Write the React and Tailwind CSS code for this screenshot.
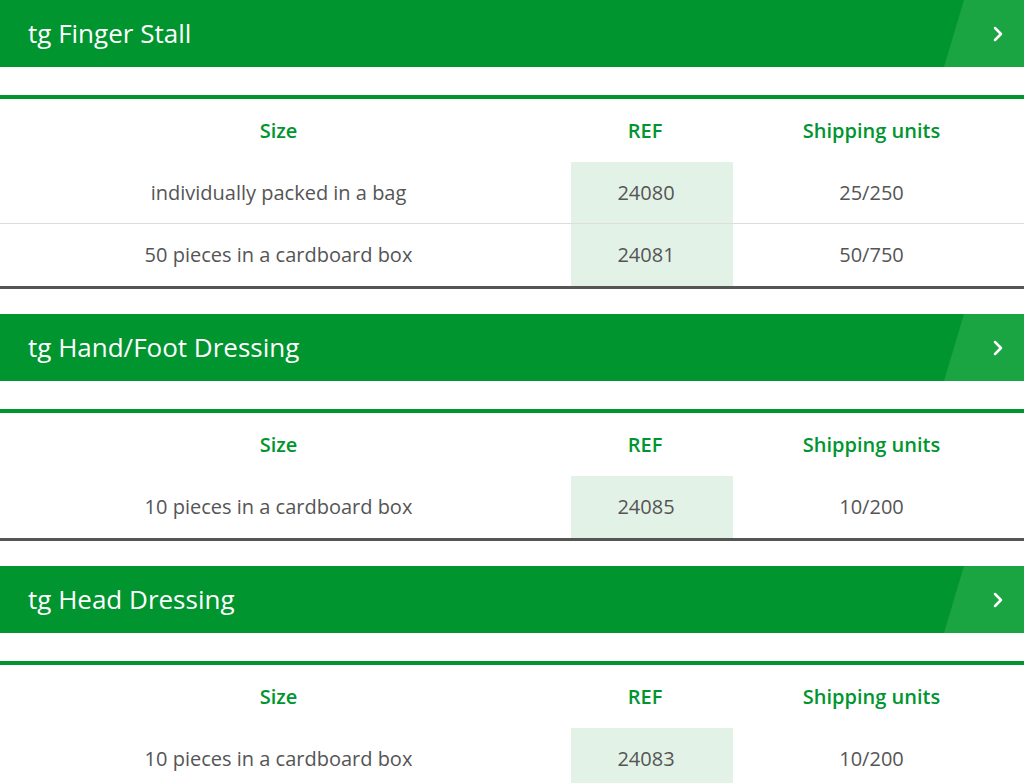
const sections = [
  {
    title: "tg Finger Stall",
    rows: [
      ["individually packed in a bag", "24080", "25/250"],
      ["50 pieces in a cardboard box", "24081", "50/750"],
    ],
  },
  { title: "tg Hand/Foot Dressing", rows: [["10 pieces in a cardboard box", "24085", "10/200"]] },
  { title: "tg Head Dressing", rows: [["10 pieces in a cardboard box", "24083", "10/200"]] },
];

function Header({ title }) {
  return (
    <div className="relative h-[67px] bg-[#00952f] overflow-hidden flex items-center">
      <div className="absolute top-0 bottom-0 right-0 w-[80px] bg-[#1ba542] [clip-path:polygon(25%_0,100%_0,100%_100%,0_100%)]" />
      <h2 className="relative pl-[28px] text-[26px] text-white">{title}</h2>
      <svg className="absolute right-[20px] top-1/2 -translate-y-1/2" width="12" height="18" viewBox="0 0 12 18">
        <path d="M3 3l6 6-6 6" fill="none" stroke="white" strokeWidth="2.5" strokeLinecap="round" strokeLinejoin="round" />
      </svg>
    </div>
  );
}

function Table({ rows }) {
  return (
    <div className="border-t-4 border-[#00952f] border-b-[3px] border-b-[#555] mt-[28px]">
      <div className="grid grid-cols-[557px_176px_1fr] h-[63px] items-center text-[20px] font-semibold text-[#00952f] text-center">
        <div>Size</div>
        <div>REF</div>
        <div className="pr-[14px]">Shipping units</div>
      </div>
      {rows.map((r, i) => (
        <div
          key={i}
          className={`grid grid-cols-[557px_176px_1fr] h-[62px] items-center text-[20px] text-[#555] text-center ${
            i < rows.length - 1 ? "border-b border-[#ddd]" : ""
          }`}
        >
          <div>{r[0]}</div>
          <div className="h-full flex items-center justify-center bg-[#e3f2e7] ml-[14px] pr-[12px]">{r[1]}</div>
          <div className="pr-[14px]">{r[2]}</div>
        </div>
      ))}
    </div>
  );
}

export default function App() {
  return (
    <div className="bg-white w-[1024px] h-[783px] overflow-hidden" style={{ fontFamily: '"Open Sans", sans-serif' }}>
      {sections.map((s, i) => (
        <div key={i} className="mb-[25px]">
          <Header title={s.title} />
          <Table rows={s.rows} />
        </div>
      ))}
    </div>
  );
}
